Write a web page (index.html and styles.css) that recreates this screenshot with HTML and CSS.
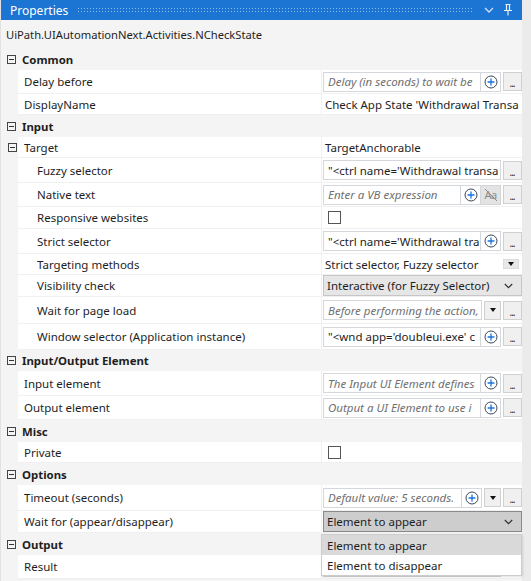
FILE: index.html
```html
<!DOCTYPE html>
<html>
<head>
<meta charset="utf-8">
<link rel="stylesheet" href="styles.css">
</head>
<body>
<div class="panel">
  <div class="titlebar">
    <span class="title">Properties</span>
    <span class="grip"></span>
    <svg class="tb-icon" width="10" height="6" viewBox="0 0 10 6"><polyline points="1,1 5,5 9,1" fill="none" stroke="#cfe2f7" stroke-width="1.3"/></svg>
    <svg class="tb-icon pin" width="10" height="12" viewBox="0 0 10 12"><path d="M2.5 0.5h5M3.5 0.5v6M6.5 0.5v6M1 6.5h8M5 6.5v5" fill="none" stroke="#e8f1fb" stroke-width="1.2"/></svg>
  </div>
  <div class="typename">UiPath.UIAutomationNext.Activities.NCheckState</div>

  <div class="rows">
    <div class="group h21"><span class="toggle"></span><span class="group-label">Common</span></div>
    <div class="prop h24">
      <div class="gutter"></div>
      <div class="name">Delay before</div>
      <div class="value">
        <div class="field"><span class="field-text ph">Delay (in seconds) to wait be</span><span class="field-btn"><svg width="14" height="14" viewBox="0 0 14 14"><circle cx="7" cy="7" r="6" fill="none" stroke="#3d4756" stroke-width="1"/><path d="M7 3.6v6.8M3.6 7h6.8" stroke="#1673e0" stroke-width="1.3"/></svg></span></div>
        <span class="dots">...</span>
      </div>
    </div>
    <div class="prop h21">
      <div class="gutter"></div>
      <div class="name">DisplayName</div>
      <div class="value"><span class="plain">Check App State 'Withdrawal Transa</span></div>
    </div>

    <div class="group h22"><span class="toggle"></span><span class="group-label">Input</span></div>
    <div class="prop h21">
      <div class="gutter"><span class="toggle"></span></div>
      <div class="name">Target</div>
      <div class="value"><span class="plain">TargetAnchorable</span></div>
    </div>
    <div class="prop h25">
      <div class="gutter"></div>
      <div class="name sub">Fuzzy selector</div>
      <div class="value">
        <div class="field"><span class="field-text">"&lt;ctrl name='Withdrawal transa</span></div>
        <span class="dots">...</span>
      </div>
    </div>
    <div class="prop h24">
      <div class="gutter"></div>
      <div class="name sub">Native text</div>
      <div class="value">
        <div class="field"><span class="field-text ph">Enter a VB expression</span><span class="field-btn"><svg width="14" height="14" viewBox="0 0 14 14"><circle cx="7" cy="7" r="6" fill="none" stroke="#3d4756" stroke-width="1"/><path d="M7 3.6v6.8M3.6 7h6.8" stroke="#1673e0" stroke-width="1.3"/></svg></span></div>
        <span class="hide-btn"><span class="aa">Aa</span><svg class="strike" width="18" height="16" viewBox="0 0 18 16"><line x1="3" y1="2" x2="15" y2="14" stroke="#8a8a8a" stroke-width="1"/></svg></span>
        <span class="dots">...</span>
      </div>
    </div>
    <div class="prop h22">
      <div class="gutter"></div>
      <div class="name sub">Responsive websites</div>
      <div class="value"><span class="checkbox"></span></div>
    </div>
    <div class="prop h25">
      <div class="gutter"></div>
      <div class="name sub">Strict selector</div>
      <div class="value">
        <div class="field"><span class="field-text">"&lt;ctrl name='Withdrawal tra</span><span class="field-btn"><svg width="14" height="14" viewBox="0 0 14 14"><circle cx="7" cy="7" r="6" fill="none" stroke="#3d4756" stroke-width="1"/><path d="M7 3.6v6.8M3.6 7h6.8" stroke="#1673e0" stroke-width="1.3"/></svg></span></div>
        <span class="dots">...</span>
      </div>
    </div>
    <div class="prop h21">
      <div class="gutter"></div>
      <div class="name sub">Targeting methods</div>
      <div class="value"><span class="plain grow">Strict selector, Fuzzy selector</span><span class="mini-drop"><span class="tri"></span></span></div>
    </div>
    <div class="prop h22">
      <div class="gutter"></div>
      <div class="name sub">Visibility check</div>
      <div class="value">
        <div class="combo"><span class="combo-text">Interactive (for Fuzzy Selector)</span><svg width="9" height="6" viewBox="0 0 9 6"><polyline points="0.8,1 4.5,4.6 8.2,1" fill="none" stroke="#333" stroke-width="1.2"/></svg></div>
      </div>
    </div>
    <div class="prop h27">
      <div class="gutter"></div>
      <div class="name sub">Wait for page load</div>
      <div class="value">
        <div class="field"><span class="field-text ph">Before performing the action,</span></div>
        <span class="drop-btn"><span class="tri"></span></span>
        <span class="dots">...</span>
      </div>
    </div>
    <div class="prop h26">
      <div class="gutter"></div>
      <div class="name sub">Window selector (Application instance)</div>
      <div class="value">
        <div class="field"><span class="field-text">"&lt;wnd app='doubleui.exe' c</span><span class="field-btn"><svg width="14" height="14" viewBox="0 0 14 14"><circle cx="7" cy="7" r="6" fill="none" stroke="#3d4756" stroke-width="1"/><path d="M7 3.6v6.8M3.6 7h6.8" stroke="#1673e0" stroke-width="1.3"/></svg></span></div>
        <span class="dots">...</span>
      </div>
    </div>

    <div class="group h21"><span class="toggle"></span><span class="group-label">Input/Output Element</span></div>
    <div class="prop h25">
      <div class="gutter"></div>
      <div class="name">Input element</div>
      <div class="value">
        <div class="field"><span class="field-text ph">The Input UI Element defines</span><span class="field-btn"><svg width="14" height="14" viewBox="0 0 14 14"><circle cx="7" cy="7" r="6" fill="none" stroke="#3d4756" stroke-width="1"/><path d="M7 3.6v6.8M3.6 7h6.8" stroke="#1673e0" stroke-width="1.3"/></svg></span></div>
        <span class="dots">...</span>
      </div>
    </div>
    <div class="prop h24">
      <div class="gutter"></div>
      <div class="name">Output element</div>
      <div class="value">
        <div class="field"><span class="field-text ph">Output a UI Element to use i</span><span class="field-btn"><svg width="14" height="14" viewBox="0 0 14 14"><circle cx="7" cy="7" r="6" fill="none" stroke="#3d4756" stroke-width="1"/><path d="M7 3.6v6.8M3.6 7h6.8" stroke="#1673e0" stroke-width="1.3"/></svg></span></div>
        <span class="dots">...</span>
      </div>
    </div>

    <div class="group h22"><span class="toggle"></span><span class="group-label">Misc</span></div>
    <div class="prop h21">
      <div class="gutter"></div>
      <div class="name">Private</div>
      <div class="value"><span class="checkbox"></span></div>
    </div>

    <div class="group h22"><span class="toggle"></span><span class="group-label">Options</span></div>
    <div class="prop h26">
      <div class="gutter"></div>
      <div class="name">Timeout (seconds)</div>
      <div class="value">
        <div class="field"><span class="field-text ph">Default value: 5 seconds.</span><span class="field-btn"><svg width="14" height="14" viewBox="0 0 14 14"><circle cx="7" cy="7" r="6" fill="none" stroke="#3d4756" stroke-width="1"/><path d="M7 3.6v6.8M3.6 7h6.8" stroke="#1673e0" stroke-width="1.3"/></svg></span></div>
        <span class="drop-btn"><span class="tri"></span></span>
        <span class="dots">...</span>
      </div>
    </div>
    <div class="prop h22">
      <div class="gutter"></div>
      <div class="name">Wait for (appear/disappear)</div>
      <div class="value">
        <div class="combo open"><span class="combo-text">Element to appear</span><svg width="9" height="6" viewBox="0 0 9 6"><polyline points="0.8,1 4.5,4.6 8.2,1" fill="none" stroke="#333" stroke-width="1.2"/></svg></div>
      </div>
    </div>

    <div class="group h22"><span class="toggle"></span><span class="group-label">Output</span></div>
    <div class="prop h24">
      <div class="gutter"></div>
      <div class="name">Result</div>
      <div class="value">
        <div class="field"><span class="field-text"></span><span class="field-btn"></span></div>
        <span class="dots"></span>
      </div>
    </div>
  </div>
</div>

<div class="popup">
  <div class="popup-item selected">Element to appear</div>
  <div class="popup-item">Element to disappear</div>
</div>
</body>
</html>
```

FILE: styles.css
```css
* { box-sizing: border-box; }
html, body {
  margin: 0;
  padding: 0;
}
body {
  background: #ebebeb;
  font-family: "Noto Sans", "Open Sans", sans-serif;
  font-size: 11.5px;
  color: #1e1e1e;
  width: 531px;
  height: 581px;
  overflow: hidden;
  position: relative;
}
.panel {
  width: 522px;
  height: 581px;
  background: #f4f4f4;
  border-left: 1px solid #e2e2e2;
}

/* title bar */
.titlebar {
  height: 20px;
  background: #1c74d3;
  display: flex;
  align-items: center;
  padding-left: 9px;
  padding-right: 9px;
  color: #fff;
}
.title {
  font-size: 12px;
  color: #fff;
}
.grip {
  flex: 1;
  height: 6px;
  margin: 0 12px 0 9px;
  background-image:
    radial-gradient(circle, rgba(180,210,245,0.75) 0.6px, transparent 0.9px);
  background-size: 3px 3px;
}
.tb-icon { display: block; }
.pin { margin-left: 9px; }

/* type name */
.typename {
  height: 29px;
  display: flex;
  align-items: center;
  padding-left: 5px;
  font-size: 11.2px;
}

/* rows */
.h21 { height: 21px; }
.h22 { height: 22px; }
.h24 { height: 24px; }
.h25 { height: 25px; }
.h26 { height: 26px; }
.h27 { height: 27px; }

.group {
  display: flex;
  align-items: center;
  padding-left: 6px;
}
.group-label {
  font-weight: bold;
  margin-left: 6px;
  font-size: 11.4px;
}
.toggle {
  width: 9px;
  height: 9px;
  border: 1px solid #444;
  position: relative;
  flex: none;
  background: transparent;
}
.toggle::after {
  content: "";
  position: absolute;
  left: 1px;
  top: 3px;
  width: 5px;
  height: 1px;
  background: #333;
}

.prop {
  display: flex;
}
.gutter {
  width: 17px;
  flex: none;
  display: flex;
  align-items: center;
  padding-left: 7px;
}
.name {
  width: 303px;
  flex: none;
  background: #fff;
  border-bottom: 1px solid #f0f0f0;
  display: flex;
  align-items: center;
  padding-left: 6px;
  white-space: nowrap;
}
.name.sub { padding-left: 19px; }
.value {
  flex: 1;
  min-width: 0;
  background: #fff;
  border-bottom: 1px solid #f0f0f0;
  border-left: 1px solid #f0f0f0;
  display: flex;
  align-items: center;
  padding-left: 1px;
}
.plain {
  padding-left: 2px;
  white-space: nowrap;
  overflow: hidden;
}
.grow { flex: 1; }

.field {
  flex: 1;
  min-width: 0;
  height: 20px;
  border: 1px solid #d4d8dc;
  background: #fff;
  display: flex;
  align-items: center;
}
.field-text {
  flex: 1;
  min-width: 0;
  padding-left: 4px;
  white-space: nowrap;
  overflow: hidden;
}
.ph {
  font-style: italic;
  color: #707070;
}
.field-btn {
  width: 20px;
  height: 100%;
  flex: none;
  border-left: 1px solid #d4d8dc;
  display: flex;
  align-items: center;
  justify-content: center;
}
.field-btn svg { display: block; }

.dots {
  width: 19px;
  height: 19px;
  flex: none;
  margin-left: 2px;
  border: 1px solid #d0d0d0;
  background: #f0f0f0;
  display: flex;
  align-items: flex-end;
  justify-content: center;
  font-size: 10px;
  line-height: 14px;
  color: #222;
  letter-spacing: -1px;
  padding-right: 1px;
}

.hide-btn {
  width: 20px;
  height: 20px;
  flex: none;
  background: #e3e3e3;
  border: 1px solid #d4d4d4;
  border-left: none;
  position: relative;
  display: flex;
  align-items: center;
  justify-content: center;
}
.aa {
  font-size: 11px;
  color: #8a8a8a;
  letter-spacing: -0.5px;
}
.strike {
  position: absolute;
  left: 1px;
  top: 1px;
}

.drop-btn {
  width: 17px;
  height: 19px;
  flex: none;
  margin-left: 2px;
  border: 1px solid #d0d0d0;
  background: #f0f0f0;
  display: flex;
  align-items: center;
  justify-content: center;
}
.tri {
  width: 0;
  height: 0;
  border-left: 3.5px solid transparent;
  border-right: 3.5px solid transparent;
  border-top: 4px solid #111;
}
.mini-drop {
  width: 16px;
  height: 10px;
  flex: none;
  margin-right: 3px;
  background: #e8e8e8;
  border: 1px solid #dcdcdc;
  display: flex;
  align-items: center;
  justify-content: center;
}

.checkbox {
  width: 13px;
  height: 13px;
  margin-left: 5px;
  border: 1px solid #555;
  background: #fff;
}

.combo {
  flex: 1;
  height: 21px;
  border: 1px solid #c6c6c6;
  background: #e6e6e6;
  display: flex;
  align-items: center;
  padding: 0 8px 0 3px;
}
.combo.open {
  background: #cdcdcd;
  border-color: #8a8a8a;
}
.combo-text {
  flex: 1;
  white-space: nowrap;
  overflow: hidden;
}

/* dropdown popup overlay */
.popup {
  position: absolute;
  left: 321px;
  top: 534px;
  width: 201px;
  background: #fff;
  border: 1px solid #cccccc;
  box-shadow: 1px 1px 2px rgba(0,0,0,0.12);
}
.popup-item {
  height: 20px;
  display: flex;
  align-items: center;
  padding-left: 5px;
}
.popup-item.selected {
  background: #d9d9d9;
}
```
